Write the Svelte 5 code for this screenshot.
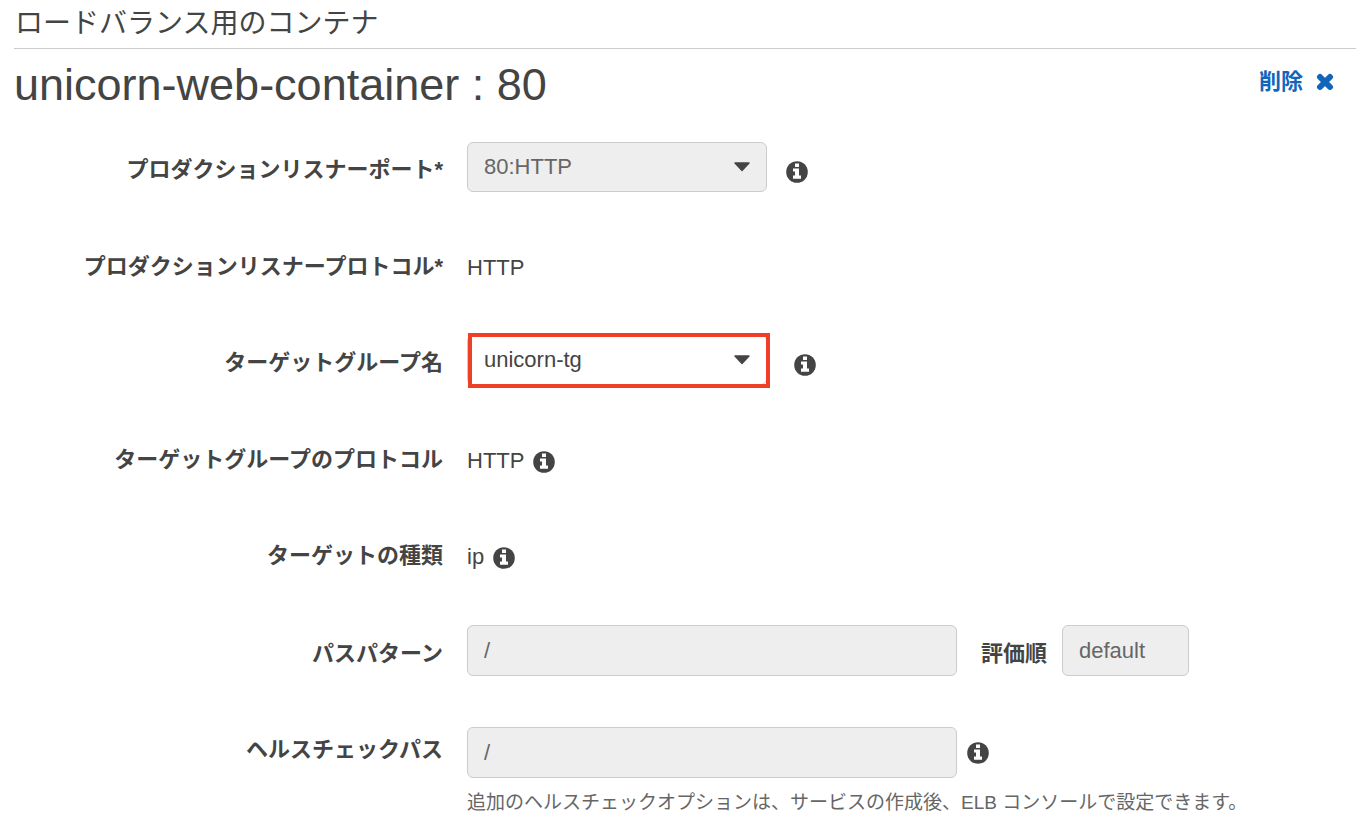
<script>
  let port = $state('80:HTTP');
  let group = $state('unicorn-tg');
</script>

{#snippet info()}
  <button class="info" type="button" aria-label="情報">
    <svg viewBox="0 0 22 22" width="22" height="22">
      <circle cx="11" cy="11" r="10.8" />
      <path d="M9 2.6h4v3.4H9zM7 7.4h6v7.2h2v3.2H7v-3.2h2v-4H7z" />
    </svg>
  </button>
{/snippet}

{#snippet caret()}
  <svg class="caret" viewBox="0 0 16 10" width="16" height="10">
    <path d="M1 1h14L8 8.6z" />
  </svg>
{/snippet}

<main>
  <h2>ロードバランス用のコンテナ</h2>
  <header>
    <h1>unicorn-web-container : 80</h1>
    <button class="remove" type="button">
      <span>削除</span>
      <svg viewBox="0 0 18 18" width="18" height="18">
        <path d="M4 4l10 10M14 4L4 14" />
      </svg>
    </button>
  </header>

  <form>
    <div class="row">
      <label for="port">プロダクションリスナーポート*</label>
      <div class="field">
        <div class="select">
          <select id="port" bind:value={port} disabled><option>80:HTTP</option></select>
          {@render caret()}
        </div>
        {@render info()}
      </div>
    </div>
    <div class="row">
      <span class="label">プロダクションリスナープロトコル*</span>
      <div class="field plain"><span>HTTP</span></div>
    </div>
    <div class="row">
      <label for="group">ターゲットグループ名</label>
      <div class="field wide">
        <div class="select marked">
          <select id="group" bind:value={group}><option>unicorn-tg</option></select>
          {@render caret()}
        </div>
        {@render info()}
      </div>
    </div>
    <div class="row">
      <span class="label">ターゲットグループのプロトコル</span>
      <div class="field plain"><span>HTTP</span>{@render info()}</div>
    </div>
    <div class="row">
      <span class="label">ターゲットの種類</span>
      <div class="field plain"><span>ip</span>{@render info()}</div>
    </div>
    <div class="row pattern">
      <label for="pattern">パスパターン</label>
      <div class="field paths">
        <input id="pattern" class="path" value="/" disabled />
        <div class="priority">
          <label for="order">評価順</label>
          <input id="order" class="order" value="default" disabled />
        </div>
      </div>
    </div>
    <div class="row last">
      <label for="health">ヘルスチェックパス</label>
      <div class="field tight">
        <input id="health" class="path" value="/" disabled />
        {@render info()}
      </div>
      <p>追加のヘルスチェックオプションは、サービスの作成後、ELB コンソールで設定できます。</p>
    </div>
  </form>
</main>

<style>
  :global(body) { margin: 0; background: #fff; }
  main {
    padding: 0 16px 0 14px;
    color: #444;
    font: 22px/32px "Liberation Sans", "Noto Sans CJK JP", sans-serif;
  }
  h1, h2, p { margin: 0; }
  h2 {
    padding: 6px 0 6px 1px;
    border-bottom: 1px solid #ccc;
    font-size: 28px;
    line-height: 36px;
    font-weight: 400;
  }
  header {
    display: flex;
    align-items: flex-start;
    justify-content: space-between;
    padding: 8px 22px 0 0;
  }
  h1 { font-size: 45px; line-height: 56px; font-weight: 400; }
  button { border: 0; padding: 0; background: none; font: inherit; }
  .remove {
    display: flex;
    align-items: center;
    gap: 13px;
    padding-top: 9px;
    color: #1166bb;
    font-weight: 700;
  }
  .remove path { fill: none; stroke: #1166bb; stroke-width: 6; stroke-linecap: round; }
  form { padding-top: 29px; }
  .row {
    display: grid;
    grid-template-columns: 429px 1fr;
    column-gap: 24px;
    align-items: start;
    margin-bottom: 47px;
  }
  label, .label { padding-top: 12px; font-weight: 700; text-align: right; }
  .field { display: flex; align-items: center; gap: 19px; }
  .wide { gap: 27px; }
  .plain { gap: 9px; height: 41px; padding-top: 8px; }
  .tight { gap: 10px; }
  .paths { gap: 24px; }
  .priority { display: flex; gap: 15px; }
  .info { display: flex; }
  .info circle { fill: #444; }
  .info path { fill: #fff; }
  .select + .info { padding-top: 10px; }
  .plain .info { padding-top: 2px; }
  .select { position: relative; width: 300px; height: 50px; }
  select, input {
    box-sizing: border-box;
    width: 100%;
    height: 50px;
    padding: 0 16px;
    border: 1px solid #ccc;
    border-radius: 6px;
    background: #eee;
    color: #666;
    font: inherit;
    opacity: 1;
    appearance: none;
  }
  input { height: 51px; }
  .caret {
    position: absolute;
    right: 17px;
    top: 20px;
    fill: #444;
    stroke: #444;
    stroke-width: 1.4;
    stroke-linejoin: round;
    pointer-events: none;
  }
  .marked select { background: #fff; color: #444; }
  .marked::after {
    content: "";
    position: absolute;
    inset: -2px -3px -3px 1px;
    border: 4px solid #ee4027;
    pointer-events: none;
  }
  .path { width: 490px; }
  .order { width: 127px; }
  .pattern { padding-top: 1px; margin-bottom: 51px; }
  .pattern label { padding-top: 13px; }
  .last { margin: 0; }
  .last label { padding-top: 7px; }
  p { grid-column: 2; padding-top: 9px; color: #666; font-size: 19px; }
</style>
